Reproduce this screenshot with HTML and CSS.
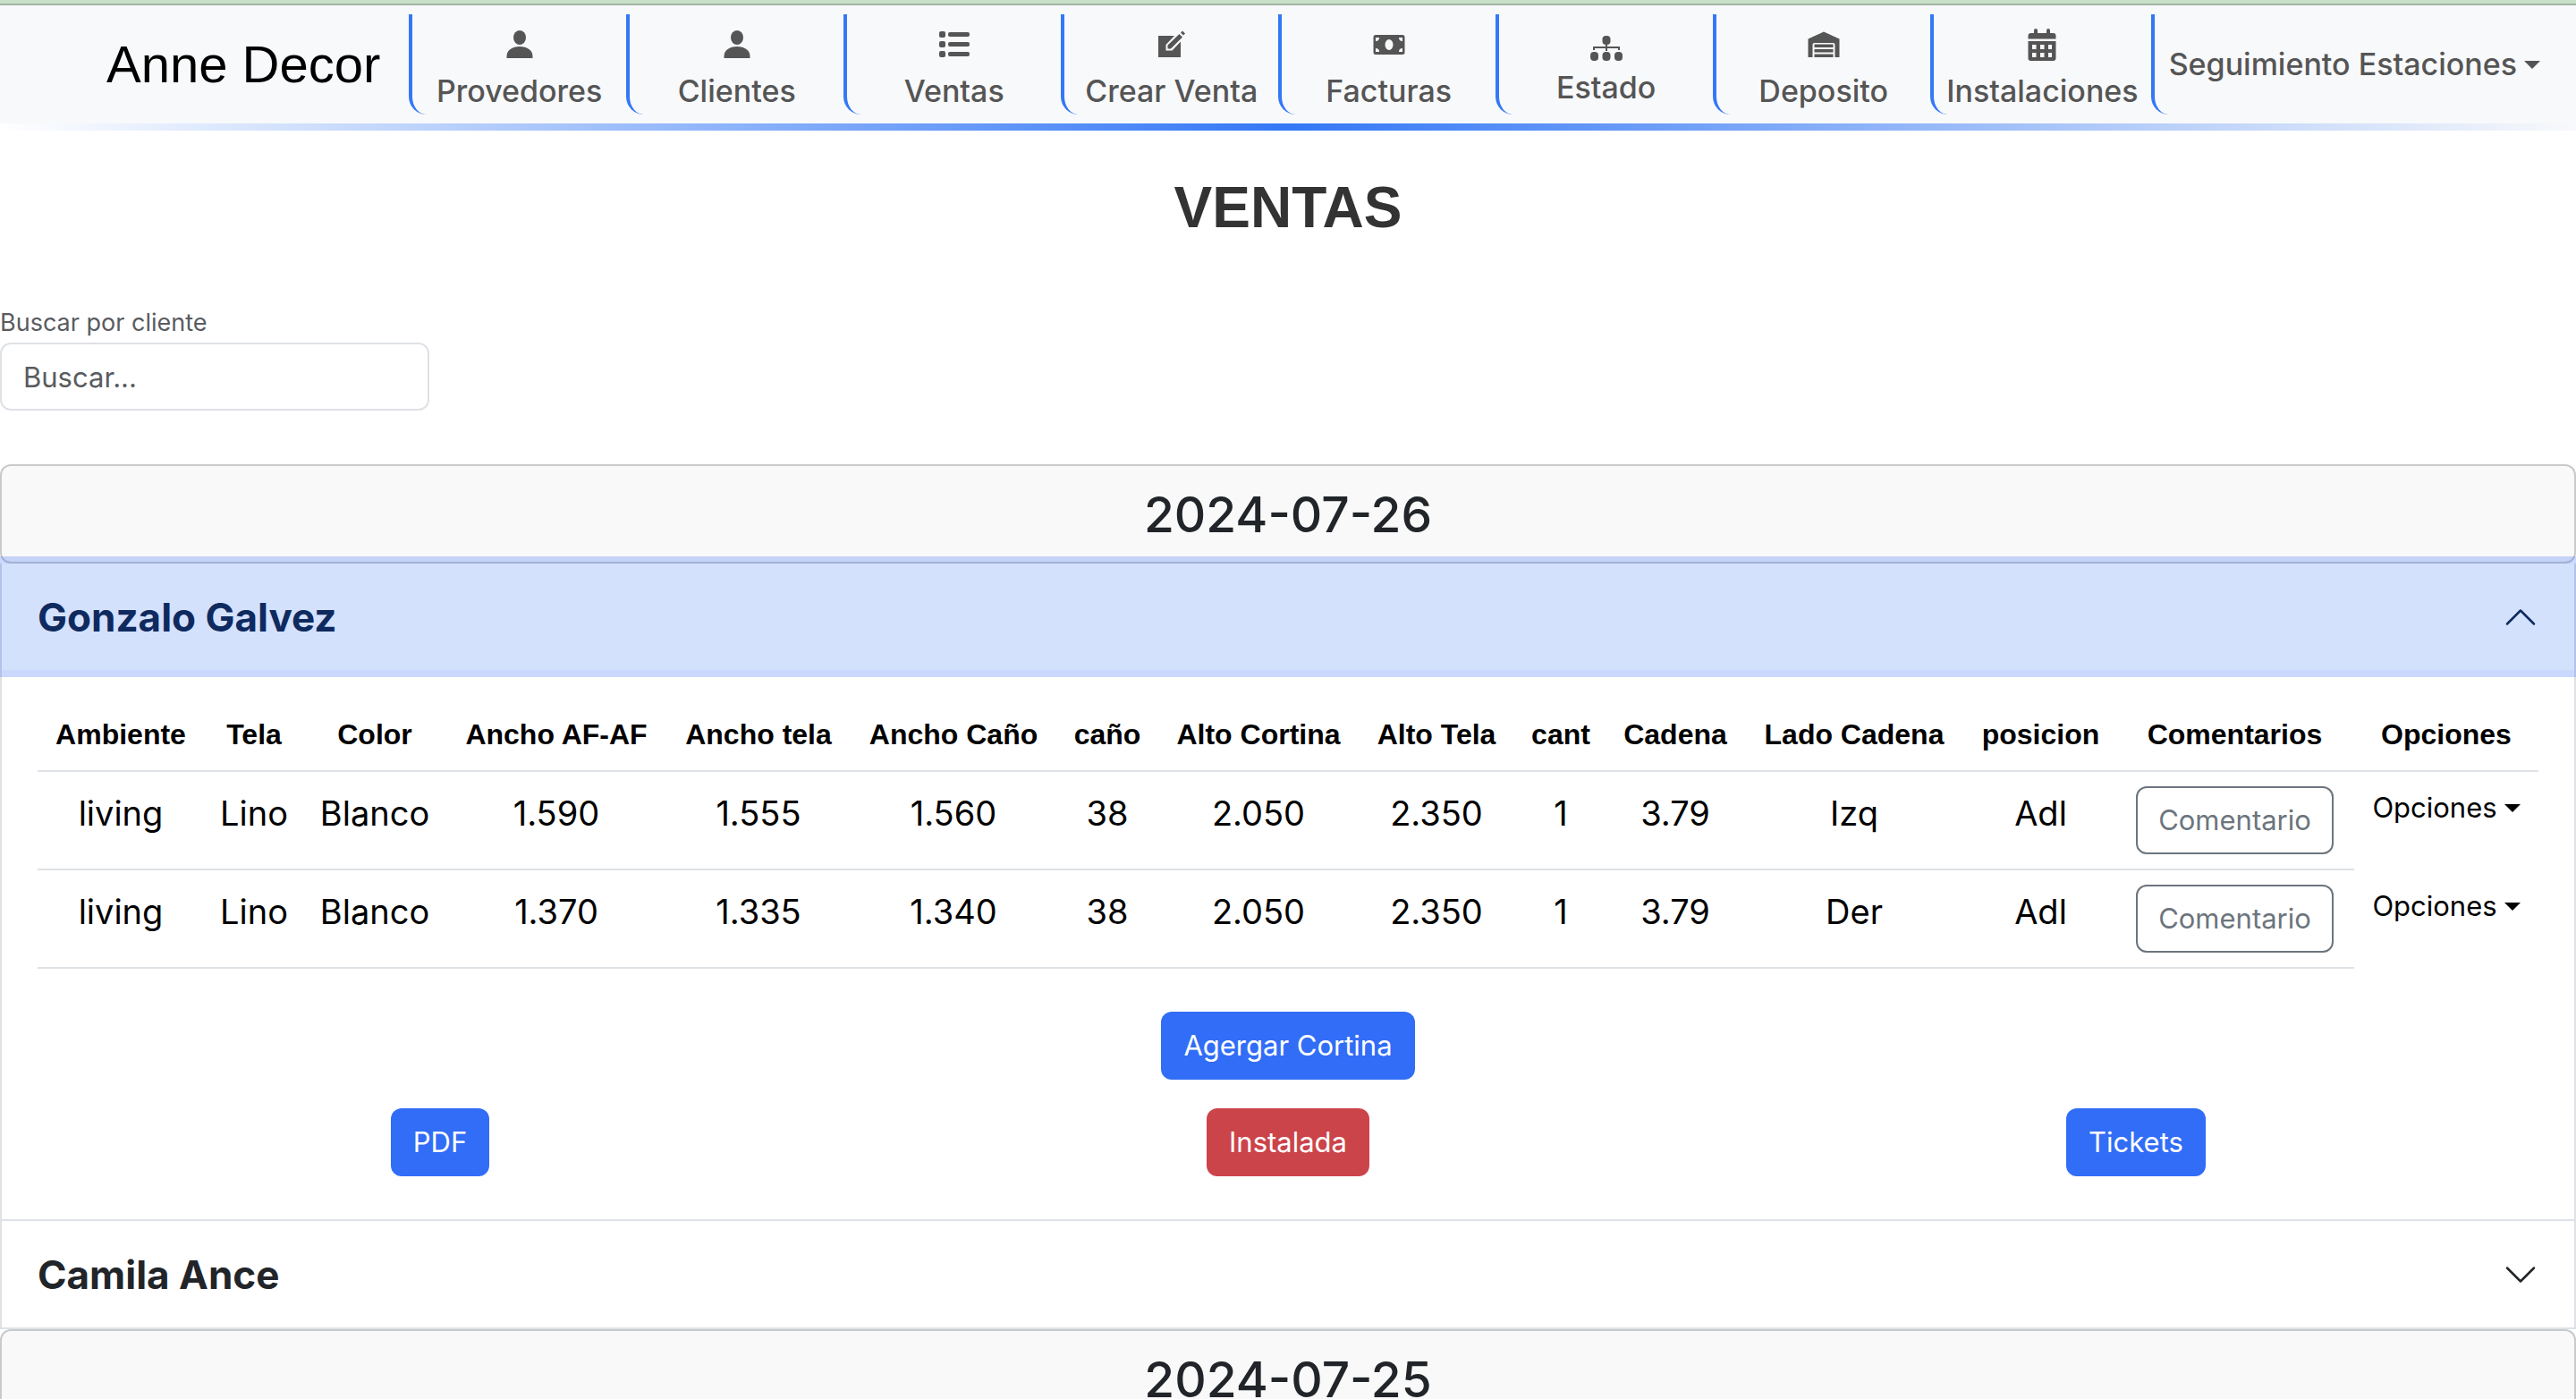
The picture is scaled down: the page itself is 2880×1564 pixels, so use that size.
FILE: index.html
```html
<!DOCTYPE html>
<html lang="es">
<head>
<meta charset="utf-8">
<meta name="viewport" content="width=device-width, initial-scale=1">
<title>Anne Decor - Ventas</title>
<link rel="stylesheet" href="styles.css">
</head>
<body>
<header class="site-header">
  <nav class="navbar">
    <a class="brand" href="#">Anne Decor</a>
    <a class="nav-item" href="#"><svg class="icon" viewBox="0 0 36 36"><ellipse cx="18" cy="10" rx="7" ry="8"/><path d="M3.500 31v2h29v-2c0-7-6-11-14.500-11S3.500 24 3.500 31z"/></svg><span>Provedores</span></a>
    <a class="nav-item" href="#"><svg class="icon" viewBox="0 0 36 36"><ellipse cx="18" cy="10" rx="7" ry="8"/><path d="M3.500 31v2h29v-2c0-7-6-11-14.500-11S3.500 24 3.500 31z"/></svg><span>Clientes</span></a>
    <a class="nav-item" href="#"><svg class="icon" viewBox="0 0 36 36"><rect x="1" y="3" width="7" height="7" rx="2"/><rect x="1" y="14" width="7" height="7" rx="2"/><rect x="1" y="25" width="7" height="7" rx="2"/><rect x="11" y="4" width="24" height="5" rx="2"/><rect x="11" y="15" width="24" height="5" rx="2"/><rect x="11" y="26" width="24" height="5" rx="2"/></svg><span>Ventas</span></a>
    <a class="nav-item" href="#"><svg class="icon" viewBox="0 0 36 36"><path d="M3 8h18L11.500 18v6.500h7L28 14.500V32H3z"/><path d="M13.500 22.500v-4L26.500 6l3.500 3.500-13 13zM28 4.500l2-2 3 3-2 2z"/></svg><span>Crear Venta</span></a>
    <a class="nav-item" href="#"><svg class="icon" viewBox="0 0 36 36"><path fill-rule="evenodd" d="M3 7h30a2.500 2.500 0 0 1 2.500 2.500v17A2.500 2.500 0 0 1 33 29H3a2.500 2.500 0 0 1-2.500-2.500v-17A2.500 2.500 0 0 1 3 7zM3 10v4a4 4 0 0 0 4-4zM33 10h-4a4 4 0 0 0 4 4zM3 26h4a4 4 0 0 0-4-4zM33 26v-4a4 4 0 0 0-4 4zM18 12a4.500 6 0 1 0 0 12 4.500 6 0 1 0 0-12z"/></svg><span>Facturas</span></a>
    <a class="nav-item" href="#"><svg class="icon icon-short" viewBox="0 0 36 32"><rect x="13.500" y="8" width="9" height="10" rx="4"/><rect x="0" y="26" width="9" height="10" rx="4"/><rect x="13.500" y="26" width="9" height="10" rx="4"/><rect x="27" y="26" width="9" height="10" rx="4"/><path d="M17 17h2v3h14v4h-2v-2H19v3h-2v-3H5v2H3v-4h14z"/></svg><span>Estado</span></a>
    <a class="nav-item" href="#"><svg class="icon" viewBox="0 0 36 36"><path d="M.5 32V11.500L18 3.500l17.500 8V32h-5V18a2 2 0 0 0-2-2h-21a2 2 0 0 0-2 2v14zM7.500 17.500h21V21h-21zM7.500 23h21v3.500h-21zM7.500 28.500h21V32h-21z"/></svg><span>Deposito</span></a>
    <a class="nav-item" href="#"><svg class="icon" viewBox="0 0 36 36"><path fill-rule="evenodd" d="M9 5V2a2 2 0 0 1 4 0v3h10V2a2 2 0 0 1 4 0v3h3.500a3 3 0 0 1 3 3v3.500h-31V8a3 3 0 0 1 3-3zM2.500 14h31v19a3 3 0 0 1-3 3h-25a3 3 0 0 1-3-3zM7 18v5h4.500v-5zM16 18v5h4.500v-5zM25 18v5h4v-5zM7 27v5h4.500v-5zM16 27v5h4.500v-5zM25 27v5h4v-5z"/></svg><span>Instalaciones</span></a>
    <button class="nav-item nav-dropdown" type="button">Seguimiento Estaciones<span class="caret"></span></button>
  </nav>
</header>

<main>
  <h1 class="page-title">VENTAS</h1>

  <form class="search">
    <label class="search-label" for="buscar">Buscar por cliente</label>
    <input class="search-input" id="buscar" type="text" placeholder="Buscar...">
  </form>

  <section>
    <h2 class="date-card">2024-07-26</h2>
    <div class="sale">
      <button class="sale-toggle is-open" type="button" aria-expanded="true">Gonzalo Galvez
        <svg class="chevron" viewBox="0 0 16 16"><path d="m2 11 6-6 6 6"/></svg></button>
      <div class="sale-body">
        <table class="sale-table">
          <colgroup><col class="w-ambiente"><col class="w-tela"><col class="w-color"><col class="w-af"><col class="w-ancho-tela"><col class="w-ancho-cano"><col class="w-cano"><col class="w-cortina"><col class="w-alto-tela"><col class="w-cant"><col class="w-cadena"><col class="w-lado"><col class="w-posicion"><col class="w-comentarios"><col class="w-opciones"></colgroup>
          <thead>
            <tr><th>Ambiente</th><th>Tela</th><th>Color</th><th>Ancho AF-AF</th><th>Ancho tela</th><th>Ancho Caño</th><th>caño</th><th>Alto Cortina</th><th>Alto Tela</th><th>cant</th><th>Cadena</th><th>Lado Cadena</th><th>posicion</th><th>Comentarios</th><th>Opciones</th></tr>
          </thead>
          <tbody>
            <tr><td>living</td><td>Lino</td><td>Blanco</td><td>1.590</td><td>1.555</td><td>1.560</td><td>38</td><td>2.050</td><td>2.350</td><td>1</td><td>3.79</td><td>Izq</td><td>Adl</td><td><button class="btn btn-outline" type="button">Comentario</button></td><td class="options"><button class="options-toggle" type="button">Opciones<span class="caret"></span></button></td></tr>
            <tr><td>living</td><td>Lino</td><td>Blanco</td><td>1.370</td><td>1.335</td><td>1.340</td><td>38</td><td>2.050</td><td>2.350</td><td>1</td><td>3.79</td><td>Der</td><td>Adl</td><td><button class="btn btn-outline" type="button">Comentario</button></td><td class="options"><button class="options-toggle" type="button">Opciones<span class="caret"></span></button></td></tr>
          </tbody>
        </table>
        <div class="add-row"><button class="btn btn-primary" type="button">Agergar Cortina</button></div>
        <div class="action-row">
          <button class="btn btn-primary" type="button">PDF</button>
          <button class="btn btn-danger" type="button">Instalada</button>
          <button class="btn btn-primary" type="button">Tickets</button>
        </div>
      </div>
    </div>
    <div class="sale">
      <button class="sale-toggle" type="button" aria-expanded="false">Camila Ance
        <svg class="chevron" viewBox="0 0 16 16"><path d="m2 5 6 6 6-6"/></svg></button>
    </div>
  </section>

  <section>
    <h2 class="date-card">2024-07-25</h2>
  </section>
</main>
</body>
</html>
```
FILE: styles.css
```css
:root {
  --blue: #316df6;
  --line: #dee2e6;
  --grey: #555;
}

* { box-sizing: border-box; }

html { overflow-x: hidden; scrollbar-width: none; }

body {
  margin: 0;
  font-family: Inter, "Liberation Sans", sans-serif;
  font-size: 31px;
  line-height: 48px;
  color: #212529;
  background: #fff;
}

button, input { font: inherit; }
button { cursor: pointer; }

.site-header {
  border-top: 4px solid #c9e0c8;
  background: #f8f9fb;
}

.site-header::after {
  content: "";
  display: block;
  height: 8px;
  background: linear-gradient(to right, #fff, #3478f6, #f8f9fb);
}

.navbar {
  display: flex;
  padding: 10px 20px 10px 0;
  border-top: 2px solid #a1b4a3;
}

.brand {
  flex: 1;
  align-self: center;
  padding-left: 119px;
  font-family: "Liberation Sans", Arial, sans-serif;
  font-size: 58px;
  line-height: 72px;
  color: #000;
  text-decoration: none;
  white-space: nowrap;
}

.nav-item {
  display: flex;
  flex-direction: column;
  align-items: center;
  gap: 11px;
  min-width: 243px;
  height: 112px;
  padding: 16px 14px 0;
  border: 0 solid #3478f6;
  border-left-width: 4px;
  border-bottom-left-radius: 20px;
  background: none;
  font-size: 34px;
  font-weight: 500;
  line-height: 46px;
  color: var(--grey);
  text-decoration: none;
  white-space: nowrap;
}

.icon { width: 36px; height: 36px; fill: currentColor; overflow: visible; }
.icon-short { height: 32px; }

.nav-dropdown {
  flex-direction: row;
  gap: 8px;
  padding: 0 20px 0 16px;
}

.caret {
  display: inline-block;
  border: 9px solid transparent;
  border-top-color: currentColor;
  border-bottom: 0;
}

.page-title {
  margin: 48px 0 69px;
  font-family: "Liberation Sans", Arial, sans-serif;
  font-size: 64px;
  line-height: 77px;
  text-align: center;
  color: #333;
}

.search { margin-bottom: 60px; }

.search-label {
  display: block;
  margin-bottom: 1px;
  font-size: 27px;
  line-height: 42px;
  color: #595c5f;
}

.search-input {
  display: block;
  width: 480px;
  height: 76px;
  padding: 12px 24px;
  border: 2px solid var(--line);
  border-radius: 12px;
  color: #212529;
}

.search-input::placeholder { color: #595c5f; opacity: 1; }

.date-card {
  margin: 0;
  padding: 21px 20px 19px;
  border: 2px solid #c9cacb;
  border-radius: 12px;
  background: #f9f9f9;
  font-size: 55px;
  font-weight: 500;
  line-height: 67px;
  text-align: center;
}

.sale {
  border: 2px solid var(--line);
  border-top: 0;
}

.sale-toggle {
  display: flex;
  justify-content: space-between;
  align-items: center;
  width: 100%;
  height: 119px;
  padding: 0 40px;
  border: 0;
  background: #fff;
  font-size: 44px;
  font-weight: 700;
  color: #212529;
}

.sale-toggle.is-open {
  position: relative;
  background: #d3e1fc;
  color: #0f2a5f;
  box-shadow: 0 0 0 8px rgba(49, 100, 246, .25);
}

.chevron {
  width: 40px;
  height: 40px;
  fill: none;
  stroke: currentColor;
  stroke-linecap: round;
  stroke-linejoin: round;
}

.sale-body { padding: 32px 40px 48px; }

.sale-table {
  width: 100%;
  margin-bottom: 48px;
  border-collapse: separate;
  border-spacing: 0;
  table-layout: fixed;
  text-align: center;
  color: #000;
}

.sale-table th {
  padding: 16px 0;
  border-bottom: 2px solid var(--line);
  font-family: "Liberation Sans", Arial, sans-serif;
  font-size: 32px;
  white-space: nowrap;
}

.sale-table td {
  padding: 16px 0;
  border-bottom: 2px solid var(--line);
  font-size: 38px;
  line-height: 60px;
  vertical-align: top;
}

.sale-table .options { border-bottom: 0; line-height: 48px; }

.sale-table .btn { display: block; margin: 0 auto; }

.w-ambiente { width: 186px; }
.w-tela { width: 112px; }
.w-color { width: 158px; }
.w-af { width: 248px; }
.w-ancho-tela { width: 204px; }
.w-ancho-cano { width: 232px; }
.w-cano { width: 112px; }
.w-cortina { width: 226px; }
.w-alto-tela { width: 172px; }
.w-cant { width: 106px; }
.w-cadena { width: 150px; }
.w-lado { width: 250px; }
.w-posicion { width: 167px; }
.w-comentarios { width: 267px; }
.w-opciones { width: 206px; }

.options-toggle {
  display: flex;
  align-items: center;
  justify-content: center;
  gap: 8px;
  width: 100%;
  padding: 0;
  border: 0;
  background: none;
  font-size: 31px;
  color: #000;
}

.btn {
  height: 76px;
  padding: 0 23px;
  border: 2px solid transparent;
  border-radius: 12px;
  font-size: 31px;
  line-height: 48px;
}

.btn-primary { background: var(--blue); color: #fff; }
.btn-danger { background: #cb444a; color: #fff; }
.btn-outline { background: #fff; border-color: #6c757d; color: #6c757d; }

.add-row { display: flex; justify-content: center; margin-bottom: 32px; }

.action-row {
  display: grid;
  grid-template-columns: repeat(3, 1fr);
  justify-items: center;
  margin: 0 -24px;
}
```
